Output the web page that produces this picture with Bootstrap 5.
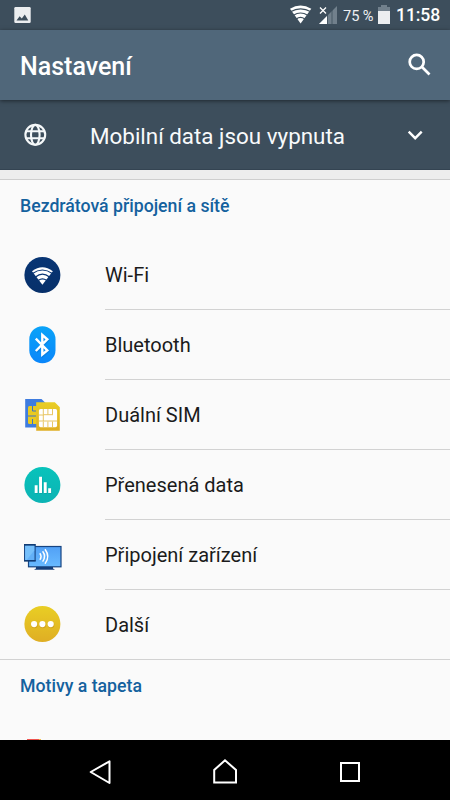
<!DOCTYPE html>
<html lang="cs">
<head>
<meta charset="utf-8">
<meta name="viewport" content="width=device-width, initial-scale=1">
<title>Nastavení</title>
<link rel="stylesheet" href="https://cdn.jsdelivr.net/npm/bootstrap@5.3.0/dist/css/bootstrap.min.css">
<style>
body{font-family:Roboto,"Noto Sans",sans-serif;height:800px;background:#fafafa;color:#1b1b1b;line-height:1}
svg{display:block;flex:none}
.statusbar{height:30px;background:#3d4e5c;color:#fff}
.battery-text{font-size:14.6px;word-spacing:-.3px;color:#eef0f2;margin-left:5px;padding-top:2px;width:34px;white-space:nowrap}
.clock{font-size:17.6px;font-weight:500;margin-left:5px;padding-top:2px;width:54px;letter-spacing:-.1px}
.appbar{height:70px;background:#50677a;box-shadow:0 1px 4px rgba(0,0,0,.5);z-index:1}
.appbar h1{font-size:25px;font-weight:500;padding-top:3px}
.notice{height:70px;background:#3d4e5c;border-bottom:1px solid #344452;color:#f8fafb;font-size:22.4px}
.notice span{padding-top:3px}
.spacer{height:10px;background:#ededed;border-bottom:1px solid #cecece}
.section-title{height:60px;padding:16px 20px 0;font-size:17.7px;font-weight:500;color:#14619e}
.setting{height:70px;font-size:20px}
.setting-label{border-bottom:1px solid #d2d2d2;padding-top:1px}
.setting:last-child{border-bottom:1px solid #d2d2d2}
.setting:last-child .setting-label{border:0}
.navkeys{height:60px}
</style>
<script src="https://cdn.jsdelivr.net/npm/bootstrap@5.3.0/dist/js/bootstrap.bundle.min.js"></script>
</head>
<body class="d-flex flex-column overflow-hidden">
<div class="statusbar d-flex align-items-center flex-shrink-0">
  <svg width="45" height="30"><rect x="14.3" y="7" width="16.4" height="16" rx="1.2" fill="#eceef0"/><path d="M16.5 20.5l3.1-4.2 2.2 2.3 3-4 3.5 5.9z" fill="#3d4e5c"/></svg>
  <svg class="ms-auto" width="52" height="30" viewBox="286 0 52 30">
    <path d="M290 8.8Q300.5 2 311.300 8.8L300.600 23.600z" fill="#fff"/>
    <path d="M290.500 11.800Q300.500 6 311 11.800M293.500 15.300Q300.500 10.800 307.700 15.300M296.300 19Q300.500 15.800 304.800 19" fill="none" stroke="#3d4e5c" stroke-width="1.100"/>
    <path d="M319 24H337V6z" fill="#71808c"/><path d="M319 24H327V16z" fill="#fff"/>
    <path d="M327.500 13v12M332 10v15" stroke="#3d4e5c" stroke-width=".8"/>
    <path d="M320 7.500l6 6M326 7.500l-6 6" stroke="#fff" stroke-width="1.300"/>
  </svg>
  <span class="battery-text">75 %</span>
  <svg width="14" height="30" viewBox="377 0 14 30"><path d="M381 5h6v2h3v4h-12V7h3z" fill="#71808c"/><path d="M378 11h12v13h-12z" fill="#eceef0"/></svg>
  <span class="clock">11:58</span>
</div>
<header class="appbar position-relative d-flex align-items-center flex-shrink-0 text-white">
  <h1 class="m-0 ms-1 ps-3 flex-grow-1">Nastavení</h1>
  <svg width="50" height="70" viewBox="400 30 50 70" fill="none" stroke="#fff" stroke-width="2.700"><circle cx="416.700" cy="61.900" r="7"/><path d="M421.500 66.500l8 8"/></svg>
</header>
<div class="notice d-flex align-items-center flex-shrink-0">
  <svg width="90" height="70" viewBox="0 100 90 70" fill="none" stroke="#f5f8f9" stroke-width="2.100"><circle cx="35.300" cy="134.800" r="9.900"/><ellipse cx="35.300" cy="134.800" rx="4.300" ry="9.900"/><path d="M26.500 131.300h17.600M26.500 138.300h17.600"/></svg>
  <span class="flex-grow-1">Mobilní data jsou vypnuta</span>
  <svg width="50" height="70" viewBox="400 100 50 70" fill="none" stroke="#fff" stroke-width="2.400"><path d="M408.700 131.700l6.500 6.500 6.500-6.500"/></svg>
</div>
<div class="spacer flex-shrink-0"></div>
<main class="flex-grow-1 overflow-hidden">
  <h2 class="section-title m-0">Bezdrátová připojení a sítě</h2>
  <div>
    <div class="setting d-flex">
      <svg width="105" height="70"><defs><linearGradient id="navy" x2="0" y2="1"><stop stop-color="#083574"/><stop offset="1" stop-color="#07306a"/></linearGradient></defs><circle cx="42.400" cy="35" r="18" fill="url(#navy)"/><path d="M32 31.200Q42.400 23.500 52.800 31.200L42.400 44.800z" fill="#fff"/><path d="M32.500 33.500Q42.400 26.500 52.300 33.500M35.500 37Q42.400 31.300 49.500 37M38.500 40.300Q42.400 37.300 46.500 40.300" fill="none" stroke="#083574" stroke-width="1.200"/></svg>
      <div class="setting-label d-flex align-items-center flex-grow-1">Wi-Fi</div>
    </div>
    <div class="setting d-flex">
      <svg width="105" height="70"><defs><linearGradient id="blue" x2="0" y2="1"><stop stop-color="#0aa3f8"/><stop offset="1" stop-color="#0a86fa"/></linearGradient></defs><rect x="29.300" y="16.200" width="26.200" height="37" rx="13" fill="url(#blue)"/><path d="M35.800 28.700L47.300 40.300 42.300 44.500V25L47.300 29.400 35.800 41" fill="none" stroke="#0870cc" stroke-opacity=".45" stroke-width="2.500" transform="translate(.7 1)"/><path d="M35.800 28.700L47.300 40.300 42.300 44.500V25L47.300 29.400 35.800 41" fill="none" stroke="#fff" stroke-width="2.400"/></svg>
      <div class="setting-label d-flex align-items-center flex-grow-1">Bluetooth</div>
    </div>
    <div class="setting d-flex">
      <svg width="105" height="70"><defs><linearGradient id="gold" x2="0" y2="1"><stop stop-color="#e9ce24"/><stop offset="1" stop-color="#dfae24"/></linearGradient></defs>
        <path d="M25.200 19h16.300l5 5v23.500H25.200z" fill="#3f7cdf"/><rect x="28" y="26" width="15" height="18" rx="1.500" fill="#e9ca1f"/><path d="M28 36h8M32.500 26v5H36M32.500 44v-5" fill="none" stroke="#3b70c9" stroke-width="1"/>
        <path d="M36.200 22.300h18.600l5 5v23.500H36.200z" fill="url(#gold)"/><rect x="38.900" y="29" width="18.200" height="18.200" rx="1.700" fill="#fff"/><path d="M43.300 29v5.500M47.900 29v5.500M52.500 29v5.500M39 35h4.300v6M43 34.700h10M39 41h18M43.300 41.500v5.500M47.900 41.500v5.500M52.500 41.500v5.500" fill="none" stroke="#e5bf52" stroke-width=".9"/></svg>
      <div class="setting-label d-flex align-items-center flex-grow-1">Duální SIM</div>
    </div>
    <div class="setting d-flex">
      <svg width="105" height="70"><defs><linearGradient id="teal" x2="0" y2="1"><stop stop-color="#08c3bb"/><stop offset="1" stop-color="#0cb3b4"/></linearGradient></defs><circle cx="42.400" cy="35" r="18" fill="url(#teal)"/><path d="M35 35.500h2.700V43H35zM39.200 26.800H42V43h-2.800zM43.800 32.200h2.800V43h-2.800zM48.300 38.300H51V43h-2.700z" fill="#078c91" opacity=".4" transform="translate(.6 .8)"/><path d="M34.700 35.300h2.900V43h-2.900zM39.100 26.700H42V43h-2.900zM43.800 32.200h2.900V43h-2.900zM48.200 38.200h2.900V43h-2.900z" fill="#fff"/></svg>
      <div class="setting-label d-flex align-items-center flex-grow-1">Přenesená data</div>
    </div>
    <div class="setting d-flex">
      <svg width="105" height="70"><defs><linearGradient id="screen" x2="0" y2="1"><stop stop-color="#51a0f6"/><stop offset="1" stop-color="#68baff"/></linearGradient></defs><path d="M36 47h17v1.500l2 1.200H34l2-1.200z" fill="#143e79"/><rect x="28.500" y="26.500" width="32.500" height="20.300" fill="url(#screen)" stroke="#164481" stroke-width="1.200"/><rect x="24.600" y="25" width="10.500" height="15.700" fill="#62b0f8" stroke="#164481" stroke-width="1.100"/><path d="M25.200 25.500h9v5l-7.500 9.500h-1.500z" fill="#76c0fb"/><path d="M24 24.800h11.700M24 40.800h11.700" stroke="#103b73" stroke-width="1.600"/><path d="M39.800 33.200q2.500 3.300 0 6.600M42.600 31.300q4 5.200 0 10.300M45 29.200q5.500 7.300 0 14.500" fill="none" stroke="#fff" stroke-width="1.500"/></svg>
      <div class="setting-label d-flex align-items-center flex-grow-1">Připojení zařízení</div>
    </div>
    <div class="setting d-flex">
      <svg width="105" height="69"><circle cx="42.400" cy="34" r="18" fill="url(#gold)"/><g fill="#b78216" opacity=".4"><circle cx="34.500" cy="35" r="3.200"/><circle cx="42.800" cy="35" r="3.200"/><circle cx="51.100" cy="35" r="3.200"/></g><g fill="#fff"><circle cx="34.100" cy="34.100" r="3.100"/><circle cx="42.400" cy="34.100" r="3.100"/><circle cx="50.700" cy="34.100" r="3.100"/></g></svg>
      <div class="setting-label d-flex align-items-center flex-grow-1">Další</div>
    </div>
  </div>
  <h2 class="section-title m-0">Motivy a tapeta</h2>
  <svg width="105" height="20"><path d="M27 19h12v1H27z" fill="#ee5350"/><path d="M39 19h2v1h-2z" fill="#f2bd47"/></svg>
</main>
<nav class="navkeys bg-black flex-shrink-0">
  <svg width="450" height="60" fill="none" stroke="#fff" stroke-width="2"><path d="M109.500 21.300v21.700L90.700 32z" stroke-linejoin="round"/><path d="M214.200 42.500V30L225 20.300l11 9.700V42.500z"/><path d="M341 22.900h18v18h-18z"/></svg>
</nav>
</body>
</html>
